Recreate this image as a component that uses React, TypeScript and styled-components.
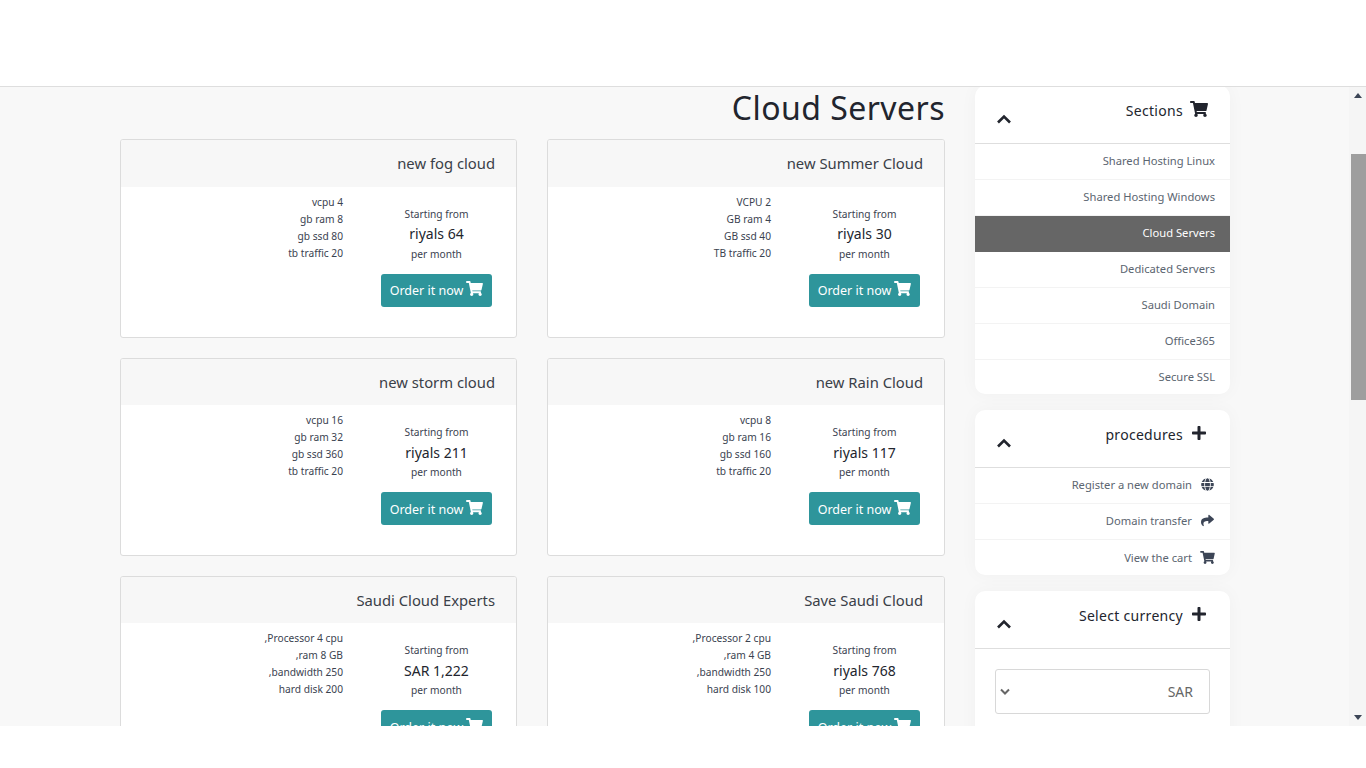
import React from "react";
import styled, { createGlobalStyle } from "styled-components";
import { FaShoppingCart, FaPlus, FaGlobe, FaShare } from "react-icons/fa";

const GlobalStyle = createGlobalStyle`
  html, body {
    margin: 0;
    padding: 0;
    background: #fff;
    overflow: hidden;
  }
  * {
    box-sizing: border-box;
  }
`;

const Page = styled.div`
  width: 1366px;
  height: 768px;
  display: flex;
  flex-direction: column;
  font-family: "Noto Sans", "Liberation Sans", sans-serif;
  color: #212529;
  background: #fff;
`;

const TopBar = styled.div`
  height: 87px;
  flex: none;
  background: #fff;
  border-bottom: 1px solid #dedede;
`;

const Viewport = styled.div`
  height: 639px;
  flex: none;
  display: flex;
  background: #f8f8f8;
`;

const BottomBar = styled.div`
  flex: 1;
  background: #fff;
`;

const Content = styled.div`
  flex: 1;
  overflow: hidden;
  display: flex;
  justify-content: flex-start;
  gap: 30px;
  padding-left: 120px;
`;

const Main = styled.main`
  width: 825px;
  flex: none;
`;

const Title = styled.h1`
  margin: 0;
  height: 52.4px;
  font-size: 32px;
  line-height: 42px;
  font-weight: 400;
  text-align: right;
  color: #22252e;
  letter-spacing: 0.45px;
`;

const Grid = styled.div`
  display: grid;
  grid-template-columns: 397px 398px;
  column-gap: 30px;
  row-gap: 20px;
`;

const Card = styled.article`
  height: 198.2px;
  background: #fff;
  border: 1px solid #dcdcdc;
  border-radius: 3px;
  overflow: hidden;
`;

const CardHead = styled.div`
  height: 46.4px;
  padding-right: 21px;
  background: #f7f7f7;
  font-size: 14.8px;
  line-height: 47px;
  text-align: right;
  color: #3a4048;
`;

const CardBody = styled.div`
  display: grid;
  grid-template-columns: 1fr 159px;
`;

const Specs = styled.ul`
  list-style: none;
  margin: 0;
  padding: 7px 14px 0 0;
  text-align: right;
  font-size: 10.2px;
  line-height: 17px;
  color: #3a4250;
`;

const Price = styled.div`
  display: flex;
  flex-direction: column;
  align-items: center;
  padding-top: 19px;
  color: #3a4250;
`;

const Small = styled.div`
  font-size: 10.2px;
  line-height: 17px;
`;

const Amount = styled.div`
  font-size: 14px;
  line-height: 21px;
  margin-top: 0.6px;
  margin-bottom: 1.6px;
  color: #22252e;
`;

const OrderButton = styled.button`
  width: 111px;
  height: 33px;
  margin-top: 11px;
  padding: 1px 0 0;
  border: none;
  border-radius: 3px;
  background: #2e959b;
  color: #fff;
  font-family: inherit;
  font-size: 12.5px;
  display: flex;
  align-items: center;
  justify-content: center;
  gap: 3px;
  flex: none;
  svg {
    width: 17px;
    height: 15px;
    margin-top: -4px;
  }
`;

const Side = styled.aside`
  width: 255px;
  flex: none;
  margin-top: -1px;
  display: flex;
  flex-direction: column;
  gap: 16px;
`;

const Panel = styled.section`
  background: #fff;
  border-radius: 10px;
  box-shadow: 0 0 18px rgba(0, 0, 0, 0.035);
`;

const PanelHead = styled.div`
  height: 58px;
  border-bottom: 1px solid #dedede;
  display: flex;
  justify-content: space-between;
  padding: 15px 22px 0 21px;
`;

const Chevron = styled.svg`
  width: 16px;
  height: 10px;
  margin-top: 13px;
  fill: none;
  stroke: #22252e;
  stroke-width: 2.6;
`;

const PanelTitle = styled.div`
  display: flex;
  align-items: flex-start;
  gap: 7px;
  font-size: 14px;
  line-height: 20px;
  color: #22252e;
  letter-spacing: 0.3px;
  svg {
    width: 18px;
    height: 16px;
    color: #22252e;
  }
`;

const ItemRow = styled.div<{ $active?: boolean }>`
  height: 36px;
  padding: 0 15px 2px 0;
  display: flex;
  align-items: center;
  justify-content: flex-end;
  gap: 8px;
  font-size: 11.2px;
  border-bottom: 1px solid ${(p) => (p.$active ? "#666" : "#f3f3f3")};
  background: ${(p) => (p.$active ? "#666" : "transparent")};
  color: ${(p) => (p.$active ? "#fff" : "#5b6570")};
  &:last-child {
    height: 34.4px;
    padding-bottom: 1px;
    border-bottom: none;
    border-radius: 0 0 10px 10px;
  }
  svg {
    width: 15px;
    height: 13px;
    color: #3c4556;
  }
`;

const SelectWrap = styled.div`
  padding: 20px 20px 0;
  height: 100px;
`;

const Select = styled.div`
  height: 45px;
  border: 1px solid #d8d8d8;
  border-radius: 3px;
  display: flex;
  align-items: center;
  justify-content: space-between;
  padding: 0 16px 0 4px;
  font-size: 14px;
  color: #666;
`;

const SelectArrow = styled.svg`
  width: 10px;
  height: 7px;
  fill: none;
  stroke: #666;
  stroke-width: 2;
`;

const Scrollbar = styled.div`
  width: 17px;
  flex: none;
  display: flex;
  flex-direction: column;
  background: #f5f5f5;
`;

const ScrollButton = styled.div`
  height: 17px;
  flex: none;
  display: flex;
  align-items: center;
  justify-content: center;
  svg {
    width: 8px;
    height: 5px;
    fill: #3c4556;
  }
`;

const ScrollTrack = styled.div`
  flex: 1;
  padding-top: 50px;
`;

const ScrollThumb = styled.div`
  height: 246px;
  margin-left: 2px;
  background: #9e9e9e;
`;

const plans = [
  { name: "new fog cloud", specs: ["vcpu 4", "gb ram 8", "gb ssd 80", "tb traffic 20"], price: "riyals 64" },
  { name: "new Summer Cloud", specs: ["VCPU 2", "GB ram 4", "GB ssd 40", "TB traffic 20"], price: "riyals 30" },
  { name: "new storm cloud", specs: ["vcpu 16", "gb ram 32", "gb ssd 360", "tb traffic 20"], price: "riyals 211" },
  { name: "new Rain Cloud", specs: ["vcpu 8", "gb ram 16", "gb ssd 160", "tb traffic 20"], price: "riyals 117" },
  { name: "Saudi Cloud Experts", specs: [",Processor 4 cpu", ",ram 8 GB", ",bandwidth 250", "hard disk 200"], price: "SAR 1,222" },
  { name: "Save Saudi Cloud", specs: [",Processor 2 cpu", ",ram 4 GB", ",bandwidth 250", "hard disk 100"], price: "riyals 768" },
];

const sections = [
  "Shared Hosting Linux",
  "Shared Hosting Windows",
  "Cloud Servers",
  "Dedicated Servers",
  "Saudi Domain",
  "Office365",
  "Secure SSL",
];

const UpChevron = () => (
  <Chevron viewBox="0 0 16 10">
    <path d="M2 8.5 L8 2.5 L14 8.5" />
  </Chevron>
);

const App = () => (
  <Page>
    <GlobalStyle />
    <TopBar />
    <Viewport>
      <Content>
        <Main>
          <Title>Cloud Servers</Title>
          <Grid>
            {plans.map((plan) => (
              <Card key={plan.name}>
                <CardHead>{plan.name}</CardHead>
                <CardBody>
                  <Specs>
                    {plan.specs.map((s) => (
                      <li key={s}>{s}</li>
                    ))}
                  </Specs>
                  <Price>
                    <Small>Starting from</Small>
                    <Amount>{plan.price}</Amount>
                    <Small>per month</Small>
                    <OrderButton>
                      Order it now <FaShoppingCart />
                    </OrderButton>
                  </Price>
                </CardBody>
              </Card>
            ))}
          </Grid>
        </Main>
        <Side>
          <Panel>
            <PanelHead>
              <UpChevron />
              <PanelTitle>
                Sections <FaShoppingCart />
              </PanelTitle>
            </PanelHead>
            {sections.map((s) => (
              <ItemRow key={s} $active={s === "Cloud Servers"}>
                {s}
              </ItemRow>
            ))}
          </Panel>
          <Panel>
            <PanelHead>
              <UpChevron />
              <PanelTitle>
                procedures <FaPlus />
              </PanelTitle>
            </PanelHead>
            <ItemRow>
              Register a new domain <FaGlobe />
            </ItemRow>
            <ItemRow>
              Domain transfer <FaShare />
            </ItemRow>
            <ItemRow>
              View the cart <FaShoppingCart />
            </ItemRow>
          </Panel>
          <Panel>
            <PanelHead>
              <UpChevron />
              <PanelTitle>
                Select currency <FaPlus />
              </PanelTitle>
            </PanelHead>
            <SelectWrap>
              <Select>
                <SelectArrow viewBox="0 0 10 7">
                  <path d="M1 1.5 L5 5.5 L9 1.5" />
                </SelectArrow>
                SAR
              </Select>
            </SelectWrap>
          </Panel>
        </Side>
      </Content>
      <Scrollbar>
        <ScrollButton>
          <svg viewBox="0 0 8 5">
            <path d="M4 0 L8 5 H0 Z" />
          </svg>
        </ScrollButton>
        <ScrollTrack>
          <ScrollThumb />
        </ScrollTrack>
        <ScrollButton>
          <svg viewBox="0 0 8 5">
            <path d="M0 0 H8 L4 5 Z" />
          </svg>
        </ScrollButton>
      </Scrollbar>
    </Viewport>
    <BottomBar />
  </Page>
);

export default App;
